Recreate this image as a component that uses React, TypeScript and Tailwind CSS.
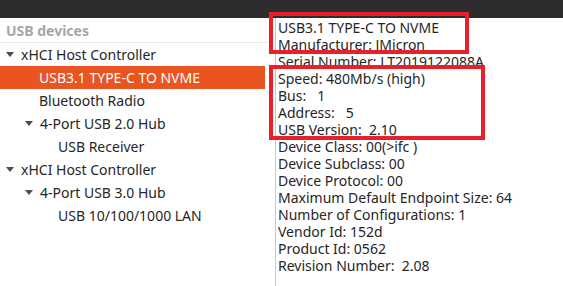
import React from "react";

type Node = { label: string; depth: number; expander?: boolean; selected?: boolean };

const tree: Node[] = [
  { label: "xHCI Host Controller", depth: 0, expander: true },
  { label: "USB3.1 TYPE-C TO NVME", depth: 1, selected: true },
  { label: "Bluetooth Radio", depth: 1 },
  { label: "4-Port USB 2.0 Hub", depth: 1, expander: true },
  { label: "USB Receiver", depth: 2 },
  { label: "xHCI Host Controller", depth: 0, expander: true },
  { label: "4-Port USB 3.0 Hub", depth: 1, expander: true },
  { label: "USB 10/100/1000 LAN", depth: 2 },
];

const details = [
  "USB3.1 TYPE-C TO NVME",
  "Manufacturer: JMicron",
  "Serial Number: LT2019122088A",
  "Speed: 480Mb/s (high)",
  "Bus:\u00a0\u00a0 1",
  "Address:\u00a0\u00a0 5",
  "USB Version:\u00a0 2.10",
  "Device Class: 00(>ifc )",
  "Device Subclass: 00",
  "Device Protocol: 00",
  "Maximum Default Endpoint Size: 64",
  "Number of Configurations: 1",
  "Vendor Id: 152d",
  "Product Id: 0562",
  "Revision Number:\u00a0 2.08",
];

const pad = ["pl-[21px]", "pl-[39px]", "pl-[58px]"];
const arrowPad = ["pl-[6px]", "pl-[25px]", "pl-[44px]"];

function Arrow() {
  return (
    <svg width="8" height="5" viewBox="0 0 8 5" className="shrink-0" aria-hidden="true">
      <path d="M0 0h8L4 5z" fill="#4c4c4c" />
    </svg>
  );
}

export default function App() {
  return (
    <div
      className="relative w-[563px] h-[286px] overflow-hidden bg-white text-[14px] text-[#262626]"
      style={{ fontFamily: '"Noto Sans", "Open Sans", sans-serif' }}
    >
      {/* title bar */}
      <div className="h-[18px] bg-[#2e2c2c]" />

      <div className="flex h-[268px]">
        {/* device tree */}
        <div className="w-[276px] shrink-0 border-r border-[#c8c8c8]">
          <div className="h-[25px] pl-[6px] flex items-center font-bold text-[#a6a6a6] border-b border-[#ececec]">
            USB devices
          </div>
          {tree.map((n, i) => (
            <div key={i} className={`h-[23px] w-[265px] flex items-center ${n.selected ? "bg-[#e95420] text-white" : ""}`}>
              {n.expander ? (
                <div className={`flex items-center gap-[7px] ${arrowPad[n.depth]}`}>
                  <Arrow />
                  <span>{n.label}</span>
                </div>
              ) : (
                <span className={pad[n.depth]}>{n.label}</span>
              )}
            </div>
          ))}
        </div>

        {/* details */}
        <div className="pl-[2px] pt-[1px] leading-[17px]">
          {details.map((d, i) => (
            <div key={i} className="whitespace-pre">{d}</div>
          ))}
        </div>
      </div>

      {/* annotation boxes */}
      <div className="absolute left-[269px] top-[12px] w-[200px] h-[42px] border-4 border-[#e8202a]" />
      <div className="absolute left-[269px] top-[65px] w-[216px] h-[75px] border-4 border-[#e8202a]" />
    </div>
  );
}
